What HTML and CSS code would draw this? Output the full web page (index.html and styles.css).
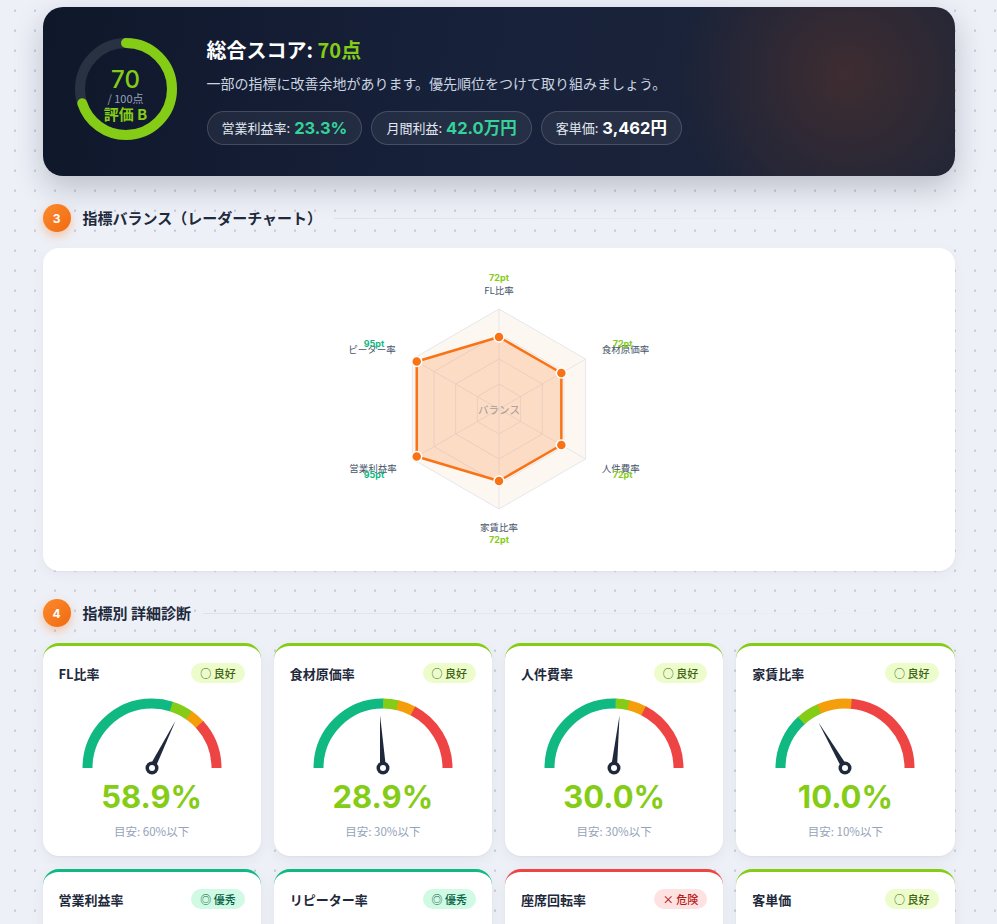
FILE: index.html
```html
<!DOCTYPE html>
<html lang="ja">
<head>
<meta charset="utf-8">
<title>店舗診断レポート</title>
<link rel="stylesheet" href="styles.css">
</head>
<body>
<main class="page">

  <section class="hero">
    <div class="ring">
      <svg class="ring-svg" viewBox="0 0 102 102">
        <circle class="ring-track" cx="51" cy="51" r="46"/>
        <circle class="ring-bar" cx="51" cy="51" r="46" pathLength="100" stroke-dasharray="70 100" transform="rotate(-90 51 51)"/>
      </svg>
      <div class="ring-text">
        <div class="ring-score">70</div>
        <div class="ring-max">/ 100点</div>
        <div class="ring-grade">評価 B</div>
      </div>
    </div>
    <div class="hero-body">
      <h1 class="hero-title">総合スコア: <span class="lime">70点</span></h1>
      <p class="hero-sub">一部の指標に改善余地があります。優先順位をつけて取り組みましょう。</p>
      <div class="pills">
        <div class="pill"><span class="pill-label">営業利益率:</span><span class="pill-value teal">23.3%</span></div>
        <div class="pill"><span class="pill-label">月間利益:</span><span class="pill-value teal">42.0万円</span></div>
        <div class="pill"><span class="pill-label">客単価:</span><span class="pill-value white">3,462円</span></div>
      </div>
    </div>
  </section>

  <div class="section-head">
    <span class="step">3</span>
    <h2 class="section-title">指標バランス（レーダーチャート）</h2>
    <span class="section-line"></span>
  </div>

  <section class="radar-card">
    <svg class="radar" viewBox="0 0 304 323" width="304" height="323">
      <polygon class="grid-outer" points="152,61 238.6,111 238.6,211 152,261 65.4,211 65.4,111"/>
      <polygon class="grid-hex" points="152,86 216.95,123.5 216.95,198.5 152,236 87.05,198.5 87.05,123.5"/>
      <polygon class="grid-hex" points="152,111 195.3,136 195.3,186 152,211 108.7,186 108.7,136"/>
      <polygon class="grid-hex" points="152,136 173.65,148.5 173.65,173.5 152,186 130.35,173.5 130.35,148.5"/>
      <line class="spoke" x1="152" y1="161" x2="152" y2="61"/>
      <line class="spoke" x1="152" y1="161" x2="238.6" y2="111"/>
      <line class="spoke" x1="152" y1="161" x2="238.6" y2="211"/>
      <line class="spoke" x1="152" y1="161" x2="152" y2="261"/>
      <line class="spoke" x1="152" y1="161" x2="65.4" y2="211"/>
      <line class="spoke" x1="152" y1="161" x2="65.4" y2="111"/>
      <text class="center-lbl" x="152" y="161" text-anchor="middle" dominant-baseline="central">バランス</text>
      <polygon class="data" points="152,89 214.35,125 214.35,197 152,233 69.73,208.5 69.73,113.5"/>
      <circle class="dot" cx="152" cy="89" r="5"/>
      <circle class="dot" cx="214.35" cy="125" r="5"/>
      <circle class="dot" cx="214.35" cy="197" r="5"/>
      <circle class="dot" cx="152" cy="233" r="5"/>
      <circle class="dot" cx="69.73" cy="208.5" r="5"/>
      <circle class="dot" cx="69.73" cy="113.5" r="5"/>

      <text class="lbl" x="152" y="42" text-anchor="middle" dominant-baseline="central">FL比率</text>
      <text class="pt pt-lime" x="152" y="29.5" text-anchor="middle" dominant-baseline="central">72pt</text>

      <text class="lbl" x="254.7" y="101.3" dominant-baseline="central">食材原価率</text>
      <text class="pt pt-lime" x="265.7" y="95.3" dominant-baseline="central">72pt</text>

      <text class="lbl" x="254.7" y="220.3" dominant-baseline="central">人件費率</text>
      <text class="pt pt-lime" x="265.7" y="226.3" dominant-baseline="central">72pt</text>

      <text class="lbl" x="152" y="278.7" text-anchor="middle" dominant-baseline="central">家賃比率</text>
      <text class="pt pt-lime" x="152" y="291.3" text-anchor="middle" dominant-baseline="central">72pt</text>

      <text class="lbl" x="49.7" y="220.3" text-anchor="end" dominant-baseline="central">営業利益率</text>
      <text class="pt pt-teal" x="16.7" y="226.3" dominant-baseline="central">95pt</text>

      <text class="lbl" x="48.7" y="101.3" text-anchor="end" dominant-baseline="central">リピーター率</text>
      <text class="pt pt-teal" x="16.7" y="95.3" dominant-baseline="central">95pt</text>
    </svg>
  </section>

  <div class="section-head">
    <span class="step">4</span>
    <h2 class="section-title">指標別 詳細診断</h2>
    <span class="section-line"></span>
  </div>

  <section class="metrics">
    <article class="metric top-lime">
      <div class="metric-head"><span class="metric-name">FL比率</span><span class="badge badge-good">○ 良好</span></div>
      <svg class="gauge" viewBox="0 0 160 84">
        <path class="arc arc-green" d="M 15.5 76 A 64.5 64.5 0 0 1 144.5 76" pathLength="100" stroke-dasharray="60.1 200"/>
        <path class="arc arc-lime" d="M 15.5 76 A 64.5 64.5 0 0 1 144.5 76" pathLength="100" stroke-dasharray="10.1 200" stroke-dashoffset="-59.7"/>
        <path class="arc arc-orange" d="M 15.5 76 A 64.5 64.5 0 0 1 144.5 76" pathLength="100" stroke-dasharray="7.4 200" stroke-dashoffset="-69.4"/>
        <path class="arc arc-red" d="M 15.5 76 A 64.5 64.5 0 0 1 144.5 76" pathLength="100" stroke-dasharray="23.6 200" stroke-dashoffset="-76.4"/>
        <polygon class="needle" points="27,76 80,73 80,79" transform="rotate(116.5 80 76)"/>
        <circle class="hub" cx="80" cy="76" r="6.5"/><circle class="hub-dot" cx="80" cy="76" r="3"/>
      </svg>
      <div class="metric-value val-lime">58.9%</div>
      <div class="metric-target">目安: 60%以下</div>
    </article>

    <article class="metric top-lime">
      <div class="metric-head"><span class="metric-name">食材原価率</span><span class="badge badge-good">○ 良好</span></div>
      <svg class="gauge" viewBox="0 0 160 84">
        <path class="arc arc-green" d="M 15.5 76 A 64.5 64.5 0 0 1 144.5 76" pathLength="100" stroke-dasharray="50.4 200"/>
        <path class="arc arc-lime" d="M 15.5 76 A 64.5 64.5 0 0 1 144.5 76" pathLength="100" stroke-dasharray="7.5 200" stroke-dashoffset="-50.1"/>
        <path class="arc arc-orange" d="M 15.5 76 A 64.5 64.5 0 0 1 144.5 76" pathLength="100" stroke-dasharray="8.6 200" stroke-dashoffset="-57.2"/>
        <path class="arc arc-red" d="M 15.5 76 A 64.5 64.5 0 0 1 144.5 76" pathLength="100" stroke-dasharray="34.6 200" stroke-dashoffset="-65.4"/>
        <polygon class="needle" points="27,76 80,73 80,79" transform="rotate(86.8 80 76)"/>
        <circle class="hub" cx="80" cy="76" r="6.5"/><circle class="hub-dot" cx="80" cy="76" r="3"/>
      </svg>
      <div class="metric-value val-lime">28.9%</div>
      <div class="metric-target">目安: 30%以下</div>
    </article>

    <article class="metric top-lime">
      <div class="metric-head"><span class="metric-name">人件費率</span><span class="badge badge-good">○ 良好</span></div>
      <svg class="gauge" viewBox="0 0 160 84">
        <path class="arc arc-green" d="M 15.5 76 A 64.5 64.5 0 0 1 144.5 76" pathLength="100" stroke-dasharray="51.2 200"/>
        <path class="arc arc-lime" d="M 15.5 76 A 64.5 64.5 0 0 1 144.5 76" pathLength="100" stroke-dasharray="6.8 200" stroke-dashoffset="-50.8"/>
        <path class="arc arc-orange" d="M 15.5 76 A 64.5 64.5 0 0 1 144.5 76" pathLength="100" stroke-dasharray="8.4 200" stroke-dashoffset="-57.2"/>
        <path class="arc arc-red" d="M 15.5 76 A 64.5 64.5 0 0 1 144.5 76" pathLength="100" stroke-dasharray="34.8 200" stroke-dashoffset="-65.2"/>
        <polygon class="needle" points="27,76 80,73 80,79" transform="rotate(96 80 76)"/>
        <circle class="hub" cx="80" cy="76" r="6.5"/><circle class="hub-dot" cx="80" cy="76" r="3"/>
      </svg>
      <div class="metric-value val-lime">30.0%</div>
      <div class="metric-target">目安: 30%以下</div>
    </article>

    <article class="metric top-lime">
      <div class="metric-head"><span class="metric-name">家賃比率</span><span class="badge badge-good">○ 良好</span></div>
      <svg class="gauge" viewBox="0 0 160 84">
        <path class="arc arc-green" d="M 15.5 76 A 64.5 64.5 0 0 1 144.5 76" pathLength="100" stroke-dasharray="26.7 200"/>
        <path class="arc arc-lime" d="M 15.5 76 A 64.5 64.5 0 0 1 144.5 76" pathLength="100" stroke-dasharray="11 200" stroke-dashoffset="-26.3"/>
        <path class="arc arc-orange" d="M 15.5 76 A 64.5 64.5 0 0 1 144.5 76" pathLength="100" stroke-dasharray="16.7 200" stroke-dashoffset="-36.9"/>
        <path class="arc arc-red" d="M 15.5 76 A 64.5 64.5 0 0 1 144.5 76" pathLength="100" stroke-dasharray="46.8 200" stroke-dashoffset="-53.2"/>
        <polygon class="needle" points="27,76 80,73 80,79" transform="rotate(59.8 80 76)"/>
        <circle class="hub" cx="80" cy="76" r="6.5"/><circle class="hub-dot" cx="80" cy="76" r="3"/>
      </svg>
      <div class="metric-value val-lime">10.0%</div>
      <div class="metric-target">目安: 10%以下</div>
    </article>

    <article class="metric top-green">
      <div class="metric-head"><span class="metric-name">営業利益率</span><span class="badge badge-best">◎ 優秀</span></div>
      <svg class="gauge" viewBox="0 0 160 84">
        <path class="arc arc-red" d="M 15.5 76 A 64.5 64.5 0 0 1 144.5 76" pathLength="100" stroke-dasharray="25.4 200"/>
        <path class="arc arc-orange" d="M 15.5 76 A 64.5 64.5 0 0 1 144.5 76" pathLength="100" stroke-dasharray="10.4 200" stroke-dashoffset="-25"/>
        <path class="arc arc-lime" d="M 15.5 76 A 64.5 64.5 0 0 1 144.5 76" pathLength="100" stroke-dasharray="15.4 200" stroke-dashoffset="-35"/>
        <path class="arc arc-green" d="M 15.5 76 A 64.5 64.5 0 0 1 144.5 76" pathLength="100" stroke-dasharray="49.9 200" stroke-dashoffset="-50.1"/>
        <polygon class="needle" points="27,76 80,73 80,79" transform="rotate(140 80 76)"/>
        <circle class="hub" cx="80" cy="76" r="6.5"/><circle class="hub-dot" cx="80" cy="76" r="3"/>
      </svg>
      <div class="metric-value val-green">23.3%</div>
      <div class="metric-target">目安: 10%以上</div>
    </article>

    <article class="metric top-green">
      <div class="metric-head"><span class="metric-name">リピーター率</span><span class="badge badge-best">◎ 優秀</span></div>
      <svg class="gauge" viewBox="0 0 160 84">
        <path class="arc arc-red" d="M 15.5 76 A 64.5 64.5 0 0 1 144.5 76" pathLength="100" stroke-dasharray="25.4 200"/>
        <path class="arc arc-orange" d="M 15.5 76 A 64.5 64.5 0 0 1 144.5 76" pathLength="100" stroke-dasharray="10.4 200" stroke-dashoffset="-25"/>
        <path class="arc arc-lime" d="M 15.5 76 A 64.5 64.5 0 0 1 144.5 76" pathLength="100" stroke-dasharray="15.4 200" stroke-dashoffset="-35"/>
        <path class="arc arc-green" d="M 15.5 76 A 64.5 64.5 0 0 1 144.5 76" pathLength="100" stroke-dasharray="49.9 200" stroke-dashoffset="-50.1"/>
        <polygon class="needle" points="27,76 80,73 80,79" transform="rotate(135 80 76)"/>
        <circle class="hub" cx="80" cy="76" r="6.5"/><circle class="hub-dot" cx="80" cy="76" r="3"/>
      </svg>
      <div class="metric-value val-green">45.0%</div>
      <div class="metric-target">目安: 30%以上</div>
    </article>

    <article class="metric top-red">
      <div class="metric-head"><span class="metric-name">座席回転率</span><span class="badge badge-bad">× 危険</span></div>
      <svg class="gauge" viewBox="0 0 160 84">
        <path class="arc arc-red" d="M 15.5 76 A 64.5 64.5 0 0 1 144.5 76" pathLength="100" stroke-dasharray="35.4 200"/>
        <path class="arc arc-orange" d="M 15.5 76 A 64.5 64.5 0 0 1 144.5 76" pathLength="100" stroke-dasharray="8.4 200" stroke-dashoffset="-35"/>
        <path class="arc arc-lime" d="M 15.5 76 A 64.5 64.5 0 0 1 144.5 76" pathLength="100" stroke-dasharray="7.4 200" stroke-dashoffset="-43"/>
        <path class="arc arc-green" d="M 15.5 76 A 64.5 64.5 0 0 1 144.5 76" pathLength="100" stroke-dasharray="49.9 200" stroke-dashoffset="-50.1"/>
        <polygon class="needle" points="27,76 80,73 80,79" transform="rotate(45 80 76)"/>
        <circle class="hub" cx="80" cy="76" r="6.5"/><circle class="hub-dot" cx="80" cy="76" r="3"/>
      </svg>
      <div class="metric-value val-red">1.0回</div>
      <div class="metric-target">目安: 2.0回以上</div>
    </article>

    <article class="metric top-lime">
      <div class="metric-head"><span class="metric-name">客単価</span><span class="badge badge-good">○ 良好</span></div>
      <svg class="gauge" viewBox="0 0 160 84">
        <path class="arc arc-red" d="M 15.5 76 A 64.5 64.5 0 0 1 144.5 76" pathLength="100" stroke-dasharray="35.4 200"/>
        <path class="arc arc-orange" d="M 15.5 76 A 64.5 64.5 0 0 1 144.5 76" pathLength="100" stroke-dasharray="8.4 200" stroke-dashoffset="-35"/>
        <path class="arc arc-lime" d="M 15.5 76 A 64.5 64.5 0 0 1 144.5 76" pathLength="100" stroke-dasharray="7.4 200" stroke-dashoffset="-43"/>
        <path class="arc arc-green" d="M 15.5 76 A 64.5 64.5 0 0 1 144.5 76" pathLength="100" stroke-dasharray="49.9 200" stroke-dashoffset="-50.1"/>
        <polygon class="needle" points="27,76 80,73 80,79" transform="rotate(104 80 76)"/>
        <circle class="hub" cx="80" cy="76" r="6.5"/><circle class="hub-dot" cx="80" cy="76" r="3"/>
      </svg>
      <div class="metric-value val-lime">3,462円</div>
      <div class="metric-target">目安: 3,000円以上</div>
    </article>
  </section>

</main>
</body>
</html>
```

FILE: styles.css
```css
* {
  box-sizing: border-box;
  margin: 0;
  padding: 0;
}

html {
  background-color: #edf0f7;
}

body {
  font-family: "Noto Sans CJK JP", "Noto Sans", sans-serif;
  color: #1e293b;
  min-height: 100vh;
  background-color: #edf0f7;
  background-image: radial-gradient(circle, #c3c9d4 1px, transparent 1.4px);
  background-size: 20px 20px;
  background-position: 5px 0.7px;
}

.page {
  max-width: 912px;
  margin: 0 auto;
  padding: 7px 0 40px;
}

/* ---------- hero ---------- */
.hero {
  display: flex;
  align-items: center;
  gap: 30px;
  height: 169px;
  padding: 0 32px;
  border-radius: 20px;
  color: #fff;
  background:
    radial-gradient(circle 170px at 88% 40%, rgba(234, 88, 12, 0.17), rgba(234, 88, 12, 0) 100%),
    linear-gradient(100deg, #0f172a 0%, #17213a 45%, #1d2538 100%);
  box-shadow: 0 12px 30px rgba(15, 23, 42, 0.22);
}

.ring {
  display: grid;
  width: 102px;
  height: 102px;
  flex: none;
  margin-top: -5px;
}

.ring > * {
  grid-area: 1 / 1;
}

.ring-svg {
  width: 102px;
  height: 102px;
}

.ring-track {
  fill: none;
  stroke: #283243;
  stroke-width: 10;
}

.ring-bar {
  fill: none;
  stroke: #84cc16;
  stroke-width: 10;
  stroke-linecap: round;
}

.ring-text {
  align-self: center;
  margin-top: 12px;
  display: flex;
  flex-direction: column;
  align-items: center;
}

.ring-score {
  font-family: Inter, "Noto Sans", sans-serif;
  font-size: 24px;
  line-height: 24px;
  font-weight: 500;
  color: #84cc16;
}

.ring-max {
  font-size: 11px;
  line-height: 13px;
  color: #94a3b8;
}

.ring-grade {
  font-size: 15px;
  line-height: 18px;
  font-weight: 700;
  color: #84cc16;
}

.hero-body {
  display: flex;
  flex-direction: column;
  margin-top: -3px;
}

.hero-title {
  height: 28px;
  font-size: 20px;
  line-height: 28px;
  font-weight: 700;
  color: #fff;
}

.lime {
  color: #84cc16;
}

.hero-sub {
  height: 20px;
  margin-top: 9px;
  font-size: 14px;
  line-height: 20px;
  color: #cbd5e1;
}

.pills {
  display: flex;
  gap: 9px;
  margin-top: 18px;
}

.pill {
  display: flex;
  align-items: center;
  gap: 4px;
  height: 34px;
  padding: 0 14px;
  border-radius: 999px;
  background: rgba(255, 255, 255, 0.06);
  border: 1px solid rgba(255, 255, 255, 0.16);
}

.pill-label {
  font-size: 13px;
  line-height: 18px;
  color: #e2e8f0;
}

.pill-value {
  font-family: Inter, "Noto Sans CJK JP", sans-serif;
  font-size: 16.5px;
  line-height: 22px;
  font-weight: 700;
}

.teal {
  color: #34d399;
}

.white {
  color: #fff;
}

/* ---------- section heads ---------- */
.section-head {
  display: flex;
  align-items: center;
  gap: 12px;
  margin: 28px 0 16px;
}

.step {
  width: 28px;
  height: 28px;
  flex: none;
  border-radius: 50%;
  display: flex;
  align-items: center;
  justify-content: center;
  font-family: Inter, sans-serif;
  font-size: 12px;
  font-weight: 700;
  color: #fff;
  background: linear-gradient(135deg, #fb8a2e, #f26a0f);
  box-shadow: 0 4px 10px rgba(249, 115, 22, 0.35);
}

.section-title {
  font-size: 15px;
  line-height: 22px;
  font-weight: 700;
  color: #1e293b;
}

.section-line {
  flex: 1;
  height: 1px;
  background: linear-gradient(90deg, #dde2ea, rgba(221, 226, 234, 0));
}

/* ---------- radar ---------- */
.radar-card {
  height: 323px;
  display: flex;
  justify-content: center;
  background: #fff;
  border-radius: 16px;
  box-shadow: 0 1px 2px rgba(15, 23, 42, 0.04), 0 4px 14px rgba(15, 23, 42, 0.04);
}

.radar {
  width: 304px;
  height: 323px;
  overflow: hidden;
}

.grid-outer {
  fill: #fdf7f2;
  stroke: #e5e7eb;
  stroke-width: 1;
}

.grid-hex {
  fill: none;
  stroke: #e6e6ea;
  stroke-width: 1;
}

.spoke {
  stroke: #e6e6ea;
  stroke-width: 1;
}

.data {
  fill: rgba(249, 115, 22, 0.2);
  stroke: #f97316;
  stroke-width: 2.5;
  stroke-linejoin: round;
}

.dot {
  fill: #f97316;
  stroke: #fff;
  stroke-width: 1.5;
}

.lbl {
  font-size: 9.5px;
  fill: #475569;
}

.pt {
  font-family: Inter, sans-serif;
  font-size: 9px;
  font-weight: 700;
}

.pt-lime {
  fill: #84cc16;
}

.pt-teal {
  fill: #10b981;
}

.center-lbl {
  font-size: 10.5px;
  fill: #94a3b8;
}

/* ---------- metrics ---------- */
.metrics {
  display: grid;
  grid-template-columns: repeat(4, 1fr);
  gap: 13px;
}

.metric {
  display: flex;
  flex-direction: column;
  align-items: center;
  padding: 17px 16px 17px;
  background: #fff;
  border-radius: 16px;
  border-top: 3px solid #84cc16;
  box-shadow: 0 1px 2px rgba(15, 23, 42, 0.04), 0 4px 14px rgba(15, 23, 42, 0.05);
}

.top-lime {
  border-top-color: #84cc16;
}

.top-green {
  border-top-color: #10b981;
}

.top-red {
  border-top-color: #ef4444;
}

.metric-head {
  align-self: stretch;
  height: 20px;
  display: flex;
  align-items: center;
  justify-content: space-between;
}

.metric-name {
  font-size: 13px;
  font-weight: 700;
  color: #1e293b;
}

.badge {
  height: 20px;
  line-height: 20px;
  padding: 0 9px;
  border-radius: 999px;
  font-size: 11px;
  font-weight: 500;
}

.badge-good {
  background: #ecfccb;
  color: #3f6212;
}

.badge-best {
  background: #d1fae5;
  color: #065f46;
}

.badge-bad {
  background: #fee2e2;
  color: #b91c1c;
}

.gauge {
  margin-top: 9px;
  width: 160px;
  height: 84px;
}

.arc {
  fill: none;
  stroke-width: 10;
}

.arc-green {
  stroke: #10b981;
}

.arc-lime {
  stroke: #84cc16;
}

.arc-orange {
  stroke: #f59e0b;
}

.arc-red {
  stroke: #ef4444;
}

.needle {
  fill: #1e293b;
}

.hub {
  fill: #1e293b;
}

.hub-dot {
  fill: #fff;
}

.metric-value {
  margin-top: 3px;
  font-family: Inter, "Noto Sans CJK JP", sans-serif;
  font-size: 31px;
  line-height: 36px;
  font-weight: 700;
}

.val-lime {
  color: #84cc16;
}

.val-green {
  color: #10b981;
}

.val-red {
  color: #ef4444;
}

.metric-target {
  margin-top: 8px;
  font-size: 11.5px;
  line-height: 16px;
  color: #94a3b8;
}
```
